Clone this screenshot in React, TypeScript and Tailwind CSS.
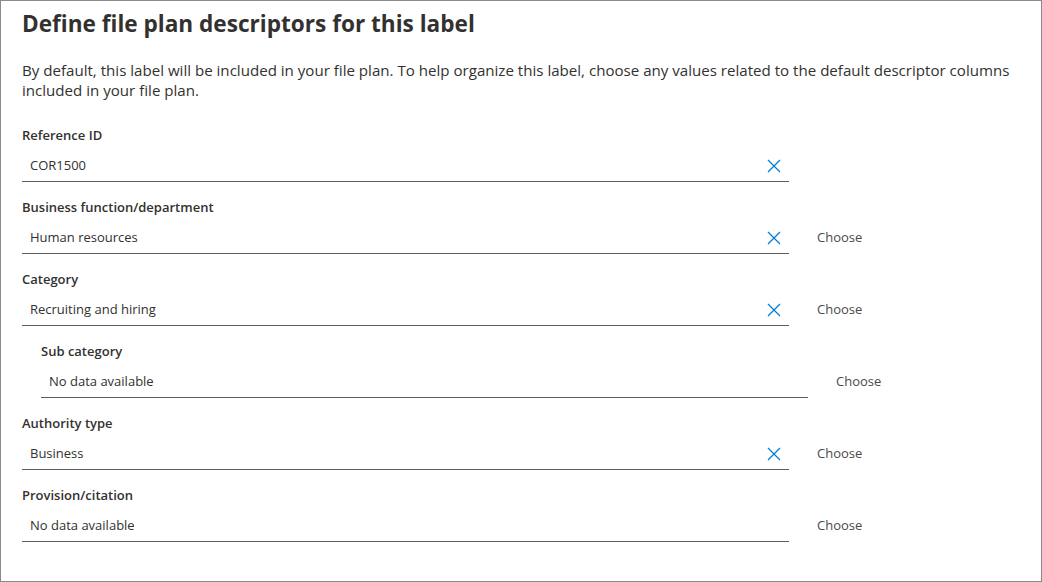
import React from "react";

const font = { fontFamily: '"Segoe UI", "Open Sans", "Noto Sans", sans-serif' };

function ClearIcon() {
  return (
    <svg width="14" height="14" viewBox="0 0 14 14" className="shrink-0">
      <path d="M1 1 L13 13 M13 1 L1 13" stroke="#0078d4" strokeWidth="1.2" fill="none" />
    </svg>
  );
}

type FieldProps = {
  label: string;
  value: string;
  clear?: boolean;
  choose?: boolean;
  indent?: boolean;
};

function Field({ label, value, clear, choose, indent }: FieldProps) {
  return (
    <div className={`flex flex-col ${indent ? "pl-[19px]" : ""}`}>
      <div className="h-5 text-[13px] font-semibold leading-5 text-[#323130]">{label}</div>
      <div className="mt-1 flex items-center">
        <div className="flex h-[33px] w-[767px] items-center justify-between border-b border-[#5c5c5c] pl-2 pr-2 pt-[2px]">
          <span className="text-[13px] text-[#323130]">{value}</span>
          {clear && <ClearIcon />}
        </div>
        {choose && <span className="ml-7 text-[13px] text-[#4a4a4a]">Choose</span>}
      </div>
    </div>
  );
}

export default function App() {
  return (
    <div style={font} className="h-[582px] w-[1042px] border border-[#8a8a8a] bg-white pl-[21px] pt-[9px]">
      <h1 className="text-[22.6px] font-bold leading-[28px] text-[#323130]">
        Define file plan descriptors for this label
      </h1>
      <p className="mt-[22px] pr-6 text-[15.1px] leading-5 text-[#323130]">
        By default, this label will be included in your file plan. To help organize this label, choose any values related to the default descriptor columns included in your file plan.
      </p>
      <div className="mt-[25px] flex flex-col gap-[15px]">
        <Field label="Reference ID" value="COR1500" clear />
        <Field label="Business function/department" value="Human resources" clear choose />
        <Field label="Category" value="Recruiting and hiring" clear choose />
        <Field label="Sub category" value="No data available" choose indent />
        <Field label="Authority type" value="Business" clear choose />
        <Field label="Provision/citation" value="No data available" choose />
      </div>
    </div>
  );
}
